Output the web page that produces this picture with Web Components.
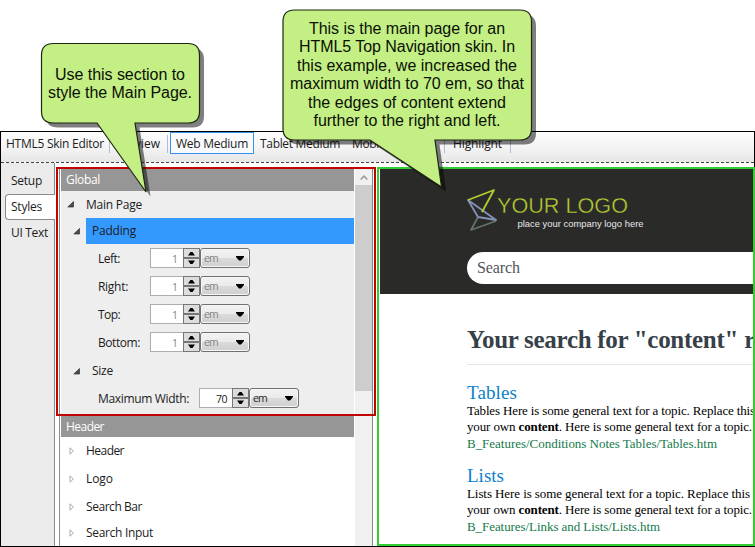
<!DOCTYPE html>
<html lang="en">
<head>
<meta charset="utf-8">
<title>HTML5 Skin Editor</title>
<style>
html,body{margin:0;width:755px;height:547px;overflow:hidden;background:#fff}
body{font:12px/16px "Open Sans","Noto Sans",sans-serif;color:#1c1c1c}
</style>
</head>
<body>
<skin-editor-page></skin-editor-page>
<script>
function define(name, css, html) {
  customElements.define(name, class extends HTMLElement {
    constructor() {
      super();
      this.attachShadow({mode: 'open'});
    }
    connectedCallback() {
      const markup = typeof html === 'function' ? html(this) : html;
      this.shadowRoot.innerHTML = '<style>*{box-sizing:border-box}' + css + '</style>' + markup;
    }
  });
}

define('skin-editor-page',
  `:host{display:block;box-sizing:border-box;position:relative;width:755px;height:547px;padding-top:131px;overflow:hidden}
   .frame{height:416px;border:1px solid #000;display:flex;flex-direction:column;background:#fff;overflow:hidden}
   .work{display:flex;height:383px;overflow:hidden}
   mark-box,call-out{position:absolute}
   .global{left:56px;top:167px;width:320px;height:249px;--c:#c00404}
   .preview{left:377px;top:167px;width:378px;height:379px;--c:#32cd32}
   .one,.two{left:0;top:0}`,
  `<div class="frame"><tool-bar></tool-bar>
     <div class="work"><side-tabs></side-tabs><style-panel></style-panel><search-preview></search-preview></div>
   </div>
   <mark-box class="global"></mark-box><mark-box class="preview"></mark-box>
   <call-out class="one" top="66" middle="120" path="M53.5 43.5H188Q199.5 43.5 199.5 55V111.500Q199.500 123 188 123H135L146 192L97 123H53.500Q41.500 123 41.500 111.500V55Q41.500 43.500 53.500 43.500Z">
     <fit-text w="130">Use this section to</fit-text><fit-text w="144">style the Main Page.</fit-text></call-out>
   <call-out class="two" top="20" middle="407" path="M294.500 10H520Q531.500 10 531.500 21.500V128.500Q531.500 140 520 140H435L441.500 187L370 140H294.500Q283 140 283 128.500V21.500Q283 10 294.500 10Z">
     <fit-text w="196">This is the main page for an</fit-text><fit-text w="216">HTML5 Top Navigation skin. In</fit-text><fit-text w="220">this example, we increased the</fit-text><fit-text w="234">maximum width to 70 em, so that</fit-text><fit-text w="198">the edges of content extend</fit-text><fit-text w="187">further to the right and left.</fit-text></call-out>`);

define('mark-box', `:host{display:block;border:2px solid var(--c);box-sizing:border-box}`, '');

define('call-out',
  `:host{display:block;width:755px;height:200px;font:16px/18.4px "Liberation Sans",sans-serif;color:#0b1005}
   svg{position:absolute;left:0;top:0}
   .text{position:absolute;display:flex;flex-direction:column;align-items:center;transform:translateX(-50%)}`,
  el => { const d = el.getAttribute('path'); return `<svg width="755" height="200" viewBox="0 0 755 200">
     <path d="${d}" transform="translate(4.500 4.500)" fill="#000" fill-opacity=".5"/>
     <path d="${d}" fill="#c3ef84" stroke="#1d2613" stroke-width="1.2"/></svg>
     <div class="text" style="left:${el.getAttribute('middle')}px;top:${el.getAttribute('top')}px"><slot></slot></div>`; });

define('tool-bar',
  `:host{display:flex;box-sizing:border-box;height:31px;flex:none;padding-left:5px;background:linear-gradient(#fdfdfd,#f3f3f3 55%,#e6e6e6);border-bottom:1px dashed #444}
   span{height:22px;line-height:24px;overflow:visible;white-space:nowrap}
   i{width:1px;height:18px;margin-top:3px;background:#b3bccb}
   .on{border:1px solid #3393f3;background:#f9fafb;line-height:22px;padding-left:5px;width:84px}`,
  `<span style="width:103px"><fit-text w="98">HTML5 Skin Editor</fit-text></span><i></i>
   <span style="width:57px;padding-left:6px"><fit-text w="44">Preview</fit-text></span><i></i>
   <span class="on" style="margin-left:2px"><fit-text w="72">Web Medium</fit-text></span>
   <span style="width:92px;padding-left:6px"><fit-text w="80">Tablet Medium</fit-text></span>
   <span style="width:98px;padding-left:6px"><fit-text w="83">Mobile Medium</fit-text></span><i></i>
   <span style="width:65px;padding-left:8px"><fit-text w="49">Highlight</fit-text></span><i></i>`);

define('side-tabs',
  `:host{display:block;box-sizing:border-box;width:54px;flex:none;background:#ebebeb;border-right:1px solid #8a8a8a}
   div{height:26px;line-height:26px;padding-left:10px}
   .setup{height:31px;padding-top:5px}
   .on{width:50px;margin-left:4px;padding-left:5px;background:#fff;border:1px solid #8a8a8a;border-right:0;border-radius:4px 0 0 4px;line-height:24px}`,
  `<div class="setup"><fit-text w="31">Setup</fit-text></div><div class="on"><fit-text w="31">Styles</fit-text></div><div><fit-text w="37">UI Text</fit-text></div>`);

define('style-panel',
  `:host{display:flex;width:324px;flex:none;box-sizing:border-box;padding:6px 6px 0 4px;overflow:hidden}
   .list{width:296px;border-left:1px solid #8b8b8b;padding-left:1px;overflow:hidden}
   .body{background:#eee;width:294px;height:225px}
   .head{height:22px;line-height:22px;background:#969696;color:#fff;padding-left:5px}
   .head.b{height:21px}
   .bar{width:18px;border-right:1px solid #85858c;background:#f0f0f0;margin-left:1px}
   .up{height:16px;display:flex;justify-content:center;align-items:center}
   .thumb{height:206px;background:#cdcdcd}`,
  `<div class="list"><div class="head"><fit-text w="34">Global</fit-text></div>
   <div class="body">
     <tree-row open h="27" arrow="6" text="25"><fit-text w="56">Main Page</fit-text></tree-row>
     <tree-row open h="26" arrow="12" text="31" selected><fit-text w="44">Padding</fit-text></tree-row>
     <value-row w="52" value="1" disabled><fit-text w="22">Left:</fit-text></value-row>
     <value-row w="52" value="1" disabled><fit-text w="30">Right:</fit-text></value-row>
     <value-row w="52" value="1" disabled><fit-text w="22">Top:</fit-text></value-row>
     <value-row w="52" value="1" disabled><fit-text w="42">Bottom:</fit-text></value-row>
     <tree-row open h="28" arrow="12" text="31" drop><fit-text w="21">Size</fit-text></tree-row>
     <value-row w="101" value="70"><fit-text w="91">Maximum Width:</fit-text></value-row>
   </div>
   <div class="head b"><fit-text w="38">Header</fit-text></div>
   <tree-row h="28" arrow="8" text="25"><fit-text w="38">Header</fit-text></tree-row>
   <tree-row h="28" arrow="8" text="25"><fit-text w="27">Logo</fit-text></tree-row>
   <tree-row h="27" arrow="8" text="25"><fit-text w="56">Search Bar</fit-text></tree-row>
   <tree-row h="26" arrow="8" text="25"><fit-text w="67">Search Input</fit-text></tree-row></div>
   <div class="bar"><div class="up"><svg width="8" height="7"><path d="M.7 5.600L4 2L7.300 5.600" fill="none" stroke="#999" stroke-width="1.500"/></svg></div><div class="thumb"></div></div>`);

define('tree-row',
  `:host{display:flex;align-items:center;box-sizing:border-box}
   svg{flex:none}
   .label{height:100%;flex:1;display:flex;align-items:center}
   .label.sel{background:#3399ff;margin-right:1px}`,
  el => {
    const open = el.hasAttribute('open'), a = +el.getAttribute('arrow'), t = +el.getAttribute('text');
    const inset = a === 12 ? 6 : 0;
    const tri = open ? '<svg width="7" height="7"><path d="M6.500 .5V6H.8Z" fill="#4a4a4a" stroke="#303030" stroke-width=".7"/></svg>'
                     : '<svg width="7" height="8"><path d="M1 .8V7.200L4.300 4Z" fill="#fff" stroke="#979797" stroke-width=".8"/></svg>';
    return `<style>:host{height:${el.getAttribute('h')}px;padding-left:${a}px;padding-top:${el.hasAttribute('drop') ? 2 : 0}px}svg{margin-right:${t - a - 7 - inset}px}.label{padding-left:${inset}px}</style>${tri}<div class="label ${el.hasAttribute('selected') ? 'sel' : ''}"><slot></slot></div>`;
  });

define('value-row',
  `:host{display:flex;align-items:center;height:28px;padding-left:37px}
   .name{flex:none;padding-top:1px}
   .num{width:33px;height:20px;border:1px solid #abadb3;border-right:0;background:#fff;text-align:right;padding:1px 5px 0 0;font-size:10.500px;line-height:18px}
   .spin{width:17px;height:20px;background:#ddd;border:1px solid #777;display:block}
   .combo{width:50px;height:20px;border:1px solid #707070;border-radius:3px;background:linear-gradient(#f2f2f2,#ebebeb 48%,#dadada 52%,#cfcfcf);box-shadow:inset 0 0 0 1px #f7f7f7;display:flex;justify-content:space-between;align-items:center;padding:0 5px 0 3px;font-size:10.500px;line-height:17px}
   .off{color:#838383}`,
  el => { const off = el.hasAttribute('disabled') ? 'off' : '', tri = 'fill="#000"';
    return `<div class="name" style="width:${el.getAttribute('w')}px"><slot></slot></div><div class="num ${off}"><fit-text w="${off ? 6 : 11}">${el.getAttribute('value')}</fit-text></div>
    <svg class="spin" width="17" height="20" viewBox="0 0 15 18"><path d="M0 9H15" stroke="#777" stroke-width="2"/><path d="M4 6.500H11L8.500 3H6.500ZM4 11.500H11L8.500 15H6.500Z" ${tri}/></svg>
    <div class="combo"><span class="${off}"><fit-text w="14">em</fit-text></span><svg width="8" height="5"><path d="M0 0H8V1L5 4.500H3L0 1Z" ${tri}/></svg></div>`; });

define('search-preview',
  `:host{display:block;flex:1;min-width:0;padding:6px 1px 0 1px;overflow:hidden;font-family:"Liberation Serif",serif}
   header{height:125px;background:#2a2a28;padding:20px 0 0 87px}
   header svg{display:block}
   .search{height:32px;border-radius:16px 0 0 16px;background:#fff;margin-top:20px;padding-left:10px;font-size:16px;line-height:32px;color:#52565a}
   main{padding-left:87px;white-space:nowrap}
   h1{margin:0;height:71px;padding-top:31px;border-bottom:1px solid #e5e5e5;font-size:25px;line-height:29px;color:#373f48;overflow:hidden}
   .items{padding-top:18px}`,
  `<header><svg width="190" height="43" viewBox="467 189 190 43">
     <g fill="none" stroke-width="1.800" stroke-linejoin="round"><path d="M478 217L471 230L496 221" stroke="#647269"/><path d="M468 200L496 220L478 217Z" stroke="#8293b6"/><path d="M482 212L494 190L468 200" stroke="#b5cc2f"/></g>
     <text x="497" y="213" font-family="Liberation Sans,sans-serif" font-size="22" textLength="131" lengthAdjust="spacingAndGlyphs" fill="#b8cf32" stroke="#2a2a28" stroke-width=".4">YOUR LOGO</text>
     <text x="517.500" y="226.500" font-family="Liberation Sans,sans-serif" font-size="9.500" textLength="126" lengthAdjust="spacingAndGlyphs" fill="#e8e8e8">place your company logo here</text></svg>
     <div class="search"><fit-text w="43">Search</fit-text></div></header>
   <main><h1><fit-text w="271">Your search for "content"</fit-text> r</h1>
     <div class="items">
     <search-result><fit-text slot="title" w="50">Tables</fit-text><fit-text slot="one" w="288">Tables Here is some general text for a topic. Replace this</fit-text><fit-text slot="two" w="285">your own <b>content</b>. Here is some general text for a topic.</fit-text><fit-text slot="path" w="250">B_Features/Conditions Notes Tables/Tables.htm</fit-text></search-result>
     <search-result><fit-text slot="title" w="37">Lists</fit-text><fit-text slot="one" w="283">Lists Here is some general text for a topic. Replace this</fit-text><fit-text slot="two" w="285">your own <b>content</b>. Here is some general text for a topic.</fit-text><fit-text slot="path" w="193">B_Features/Links and Lists/Lists.htm</fit-text></search-result></div></main>`);

define('search-result',
  `:host{display:block;height:83px;color:#000;font-size:13px;line-height:16px}
   .t{font-size:19px;line-height:20px;color:#0e80cc}.p{color:#147a4b;line-height:17px}`,
  `<div class="t"><slot name="title"></slot></div><div><slot name="one"></slot></div><div><slot name="two"></slot></div><div class="p"><slot name="path"></slot></div>`);

// Spreads its text over the width given in the w attribute.
customElements.define('fit-text', class extends HTMLElement {
  constructor() {
    super();
    this.attachShadow({mode: 'open'}).innerHTML = '<style>:host{display:inline-block;white-space:nowrap;vertical-align:top;text-align:left}</style><slot></slot>';
  }
  connectedCallback() {
    const natural = this.getBoundingClientRect().width;
    const n = this.textContent.length;
    if (n > 1) this.style.letterSpacing = ((+this.getAttribute('w') - natural) / n).toFixed(3) + 'px';
  }
});
</script>
</body>
</html>
